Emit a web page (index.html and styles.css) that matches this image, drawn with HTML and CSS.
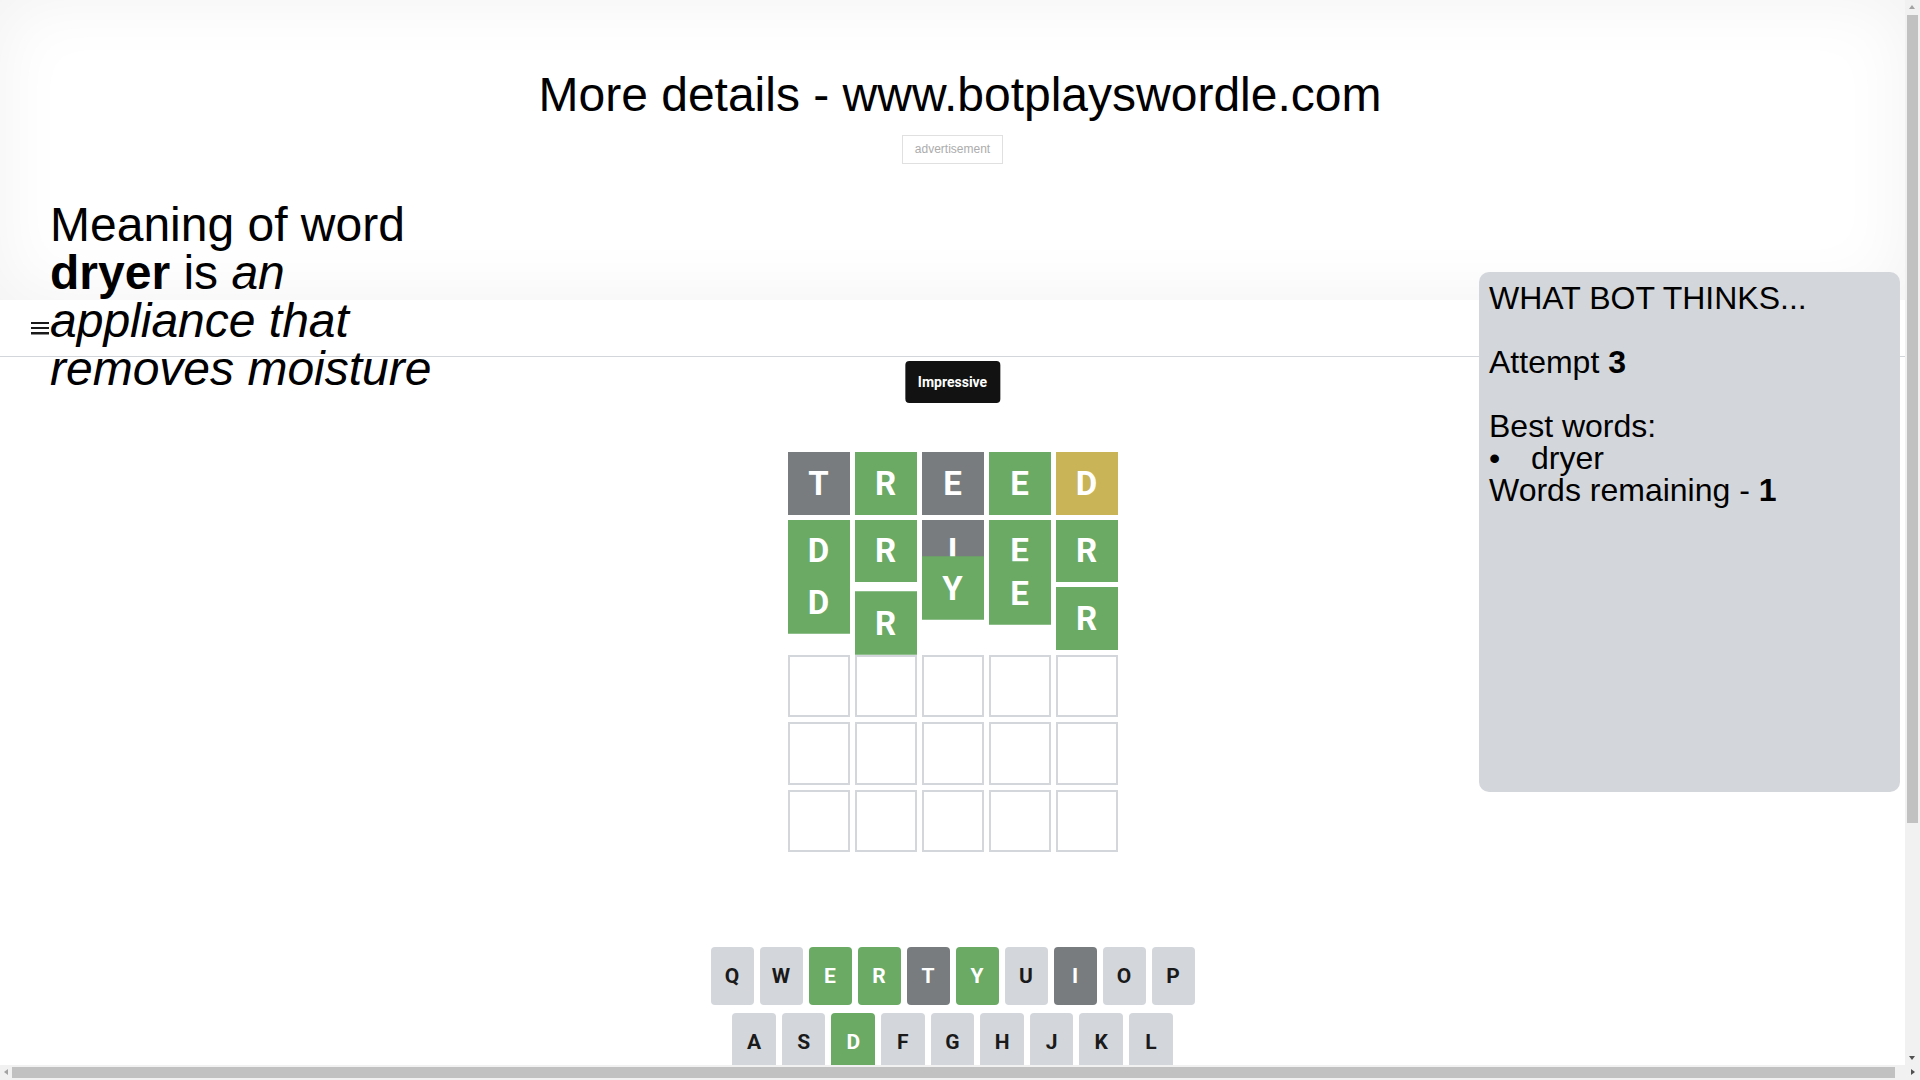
FILE: index.html
```html
<!DOCTYPE html>
<html lang="en">
<head>
    <meta charset="UTF-8">
    <meta name="viewport" content="width=device-width, initial-scale=1.0">
    <title>Bot plays Wordle</title>
    <link rel="stylesheet" href="styles.css">
</head>
<body>
    <div class="promo">
        <h1>More details - www.botplayswordle.com</h1>
        <div class="ad">advertisement</div>
    </div>

    <div id="game">
        <header>
            <button class="menu-btn" aria-label="menu">
                <svg width="18" height="13" viewBox="0 0 18 13">
                    <rect x="0" y="0" width="18" height="2" fill="#1a1a1b"/>
                    <rect x="0" y="5" width="18" height="2" fill="#1a1a1b"/>
                    <rect x="0" y="10" width="18" height="2.5" fill="#1a1a1b"/>
                </svg>
            </button>
        </header>

        <div class="toast">Impressive</div>

        <div class="board-container">
            <div class="board">
                <div class="row">
                    <div class="tile absent">T</div>
                    <div class="tile correct">R</div>
                    <div class="tile absent">E</div>
                    <div class="tile correct">E</div>
                    <div class="tile present">D</div>
                </div>
                <div class="row">
                    <div class="tile correct">D</div>
                    <div class="tile correct">R</div>
                    <div class="tile absent">I</div>
                    <div class="tile correct">E</div>
                    <div class="tile correct">R</div>
                </div>
                <!-- tiles of the last guess are still dropping in -->
                <div class="row landing">
                    <div class="tile correct">D</div>
                    <div class="tile correct">R</div>
                    <div class="tile correct">Y</div>
                    <div class="tile correct">E</div>
                    <div class="tile correct">R</div>
                </div>
                <div class="row">
                    <div class="tile"></div><div class="tile"></div><div class="tile"></div><div class="tile"></div><div class="tile"></div>
                </div>
                <div class="row">
                    <div class="tile"></div><div class="tile"></div><div class="tile"></div><div class="tile"></div><div class="tile"></div>
                </div>
                <div class="row">
                    <div class="tile"></div><div class="tile"></div><div class="tile"></div><div class="tile"></div><div class="tile"></div>
                </div>
            </div>
        </div>

        <div class="keyboard">
            <div class="key-row">
                <button class="key">q</button>
                <button class="key">w</button>
                <button class="key correct">e</button>
                <button class="key correct">r</button>
                <button class="key absent">t</button>
                <button class="key correct">y</button>
                <button class="key">u</button>
                <button class="key absent">i</button>
                <button class="key">o</button>
                <button class="key">p</button>
            </div>
            <div class="key-row">
                <div class="spacer"></div>
                <button class="key">a</button>
                <button class="key">s</button>
                <button class="key correct">d</button>
                <button class="key">f</button>
                <button class="key">g</button>
                <button class="key">h</button>
                <button class="key">j</button>
                <button class="key">k</button>
                <button class="key">l</button>
                <div class="spacer"></div>
            </div>
            <div class="key-row">
                <button class="key wide">enter</button>
                <button class="key">z</button>
                <button class="key">x</button>
                <button class="key">c</button>
                <button class="key">v</button>
                <button class="key">b</button>
                <button class="key">n</button>
                <button class="key">m</button>
                <button class="key wide">&#9003;</button>
            </div>
        </div>
    </div>

    <div class="meaning">Meaning of word <b>dryer</b> is <i>an appliance that removes moisture</i></div>

    <div class="bot-panel">
        WHAT BOT THINKS...<br><br>
        Attempt <b>3</b><br><br>
        Best words:
        <ul>
            <li>dryer</li>
        </ul>
        Words remaining - <b>1</b>
    </div>

    <!-- window scrollbars -->
    <div class="scrollbar vertical">
        <span class="arrow up"></span>
        <span class="thumb"></span>
        <span class="arrow down"></span>
    </div>
    <div class="scrollbar horizontal">
        <span class="arrow left"></span>
        <span class="thumb"></span>
        <span class="arrow right"></span>
    </div>
</body>
</html>
```

FILE: styles.css
```css
* {
    box-sizing: border-box;
}
body {
    position: relative;
    margin: 0 15px 0 0;
    font-family: "Liberation Sans", Arial, sans-serif;
    color: #000;
    background-color: #fff;
}

/* top promo block */
.promo {
    height: 300px;
    padding-top: 67px;
    background-color: #fff;
    box-shadow: inset 0 0 70px rgba(0, 0, 0, 0.055);
}
.promo h1 {
    width: 100vw;
    margin: 0;
    font-size: 48px;
    font-weight: normal;
    text-align: center;
}
.ad {
    width: 101px;
    margin: 13px auto 0;
    padding: 6px 0;
    border: 1px solid #e0e0e0;
    color: #acacac;
    font-size: 12px;
    line-height: 15px;
    text-align: center;
}

/* game */
#game {
    position: relative;
    height: 1065px;
}
header {
    height: 57px;
    padding-left: 31px;
    display: flex;
    align-items: center;
    border-bottom: 1px solid #d3d6da;
}
.menu-btn {
    padding: 0;
    border: none;
    background: none;
    display: flex;
    cursor: pointer;
}
.toast {
    position: absolute;
    top: 61px;
    left: 50%;
    transform: translateX(-50%);
    padding: 13px;
    background-color: #121212;
    color: #fff;
    border-radius: 4px;
    font-family: Roboto, "Liberation Sans", sans-serif;
    font-size: 14px;
    font-weight: bold;
    line-height: 16px;
    z-index: 3;
}
.board-container {
    height: 590px;
    display: flex;
    align-items: center;
    justify-content: center;
}
.board {
    width: 350px;
    height: 420px;
    padding: 10px;
    display: grid;
    grid-template-rows: repeat(6, 1fr);
    gap: 5px;
}
.row {
    display: grid;
    grid-template-columns: repeat(5, 1fr);
    gap: 5px;
}
.tile {
    display: flex;
    align-items: center;
    justify-content: center;
    border: 2px solid #d3d6da;
    color: #fff;
    font-family: Roboto, "Liberation Sans", sans-serif;
    font-size: 33px;
    font-weight: bold;
    line-height: 1;
}
.tile.correct {
    background-color: #6aaa64;
    border-color: #6aaa64;
}
.tile.present {
    background-color: #c9b458;
    border-color: #c9b458;
}
.tile.absent {
    background-color: #787c7e;
    border-color: #787c7e;
}
.row.landing .tile:nth-child(1) { transform: translateY(-16.5px); }
.row.landing .tile:nth-child(2) { transform: translateY(4.5px); }
.row.landing .tile:nth-child(3) { transform: translateY(-30.5px); }
.row.landing .tile:nth-child(4) { transform: translateY(-25.5px); }

.keyboard {
    width: 500px;
    margin: 0 auto;
    padding: 0 8px;
}
.key-row {
    display: flex;
    margin-bottom: 8px;
}
.key {
    flex: 1;
    height: 58px;
    margin: 0 6px 0 0;
    padding: 0;
    border: 0;
    border-radius: 4px;
    background-color: #d3d6da;
    color: #1a1a1b;
    font-family: Roboto, "Liberation Sans", sans-serif;
    font-size: 21px;
    font-weight: bold;
    text-transform: uppercase;
    cursor: pointer;
}
.key:last-of-type {
    margin-right: 0;
}
.key.wide {
    flex: 1.5;
    font-size: 12px;
}
.key.correct {
    background-color: #6aaa64;
    color: #fff;
}
.key.absent {
    background-color: #787c7e;
    color: #fff;
}
.spacer {
    flex: 0.5;
}

/* overlays */
.meaning {
    position: absolute;
    top: 201px;
    left: 50px;
    width: 420px;
    font-size: 48px;
    line-height: 48px;
    z-index: 2;
}
.bot-panel {
    position: absolute;
    top: 272px;
    right: 5px;
    width: 421px;
    height: 520px;
    padding: 10px 10px 10px 10px;
    background-color: #d3d6da;
    border-radius: 10px;
    font-size: 32px;
    line-height: 32px;
    z-index: 2;
}
.bot-panel ul {
    margin: 0;
    padding: 0;
    list-style: none;
}
.bot-panel li::before {
    content: "\2022";
    display: inline-block;
    width: 42px;
}

/* scrollbars of the window */
.scrollbar {
    position: fixed;
    background-color: #f1f1f1;
    z-index: 10;
}
.scrollbar.vertical {
    top: 0;
    right: 0;
    width: 15px;
    height: 1065px;
}
.scrollbar.horizontal {
    left: 0;
    bottom: 0;
    width: 100vw;
    height: 15px;
}
.scrollbar .thumb {
    position: absolute;
    background-color: #c1c1c1;
}
.scrollbar.vertical .thumb {
    top: 15px;
    left: 2px;
    width: 11px;
    height: 808px;
}
.scrollbar.horizontal .thumb {
    left: 12px;
    top: 2px;
    width: 1883px;
    height: 11px;
}
.arrow {
    position: absolute;
    width: 0;
    height: 0;
    border: 0 solid transparent;
}
.arrow.up {
    top: 5px;
    left: 4px;
    border-width: 0 3.5px 4px;
    border-bottom-color: #a3a3a3;
}
.arrow.down {
    bottom: 5px;
    left: 4px;
    border-width: 4px 3.5px 0;
    border-top-color: #505050;
}
.arrow.left {
    left: 4px;
    top: 4px;
    border-width: 3.5px 4px 3.5px 0;
    border-right-color: #a3a3a3;
}
.arrow.right {
    right: 5px;
    top: 4px;
    border-width: 3.5px 0 3.5px 4px;
    border-left-color: #505050;
}
```
